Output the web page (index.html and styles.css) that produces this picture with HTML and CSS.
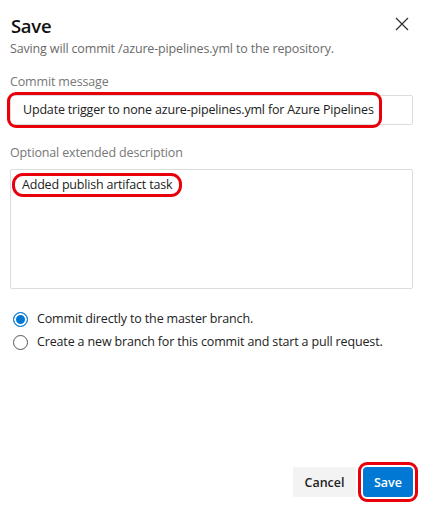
FILE: index.html
```html
<!DOCTYPE html>
<html lang="en">
<head>
<meta charset="utf-8">
<link rel="stylesheet" href="styles.css">
</head>
<body>
<div class="dialog">
  <div class="header">
    <h1 class="title">Save</h1>
    <button class="close" aria-label="Close">
      <svg width="14" height="14" viewBox="0 0 14 14"><path d="M1 1L13 13M13 1L1 13" stroke="#333" stroke-width="1.3" fill="none"/></svg>
    </button>
  </div>
  <p class="subtitle">Saving will commit /azure-pipelines.yml to the repository.</p>

  <label class="label">Commit message</label>
  <div class="field">
    <div class="input">Update trigger to none azure-pipelines.yml for Azure Pipelines</div>
    <div class="mark mark-input"></div>
  </div>

  <label class="label label-desc">Optional extended description</label>
  <div class="textarea"><span class="mark-text">Added publish artifact task</span></div>

  <div class="radios">
    <div class="radio-row"><span class="radio checked"></span><span>Commit directly to the master branch.</span></div>
    <div class="radio-row"><span class="radio"></span><span>Create a new branch for this commit and start a pull request.</span></div>
  </div>

  <div class="footer">
    <button class="btn btn-cancel">Cancel</button>
    <button class="btn btn-save">Save</button>
  </div>
</div>
</body>
</html>
```

FILE: styles.css
```css
* { box-sizing: border-box; }
html, body { margin: 0; padding: 0; background: #fff; }
body {
  font-family: "Open Sans", "Noto Sans", sans-serif;
  color: #222;
  height: 509px;
}
.dialog {
  height: 509px;
  display: flex;
  flex-direction: column;
  padding: 12px 12px 6px 10px;
}
.header {
  display: flex;
  justify-content: space-between;
  align-items: flex-start;
}
.title {
  margin: 0;
  padding-left: 1px;
  font-size: 18.5px;
  font-weight: 600;
  line-height: 28px;
  letter-spacing: -0.3px;
  color: #111;
}
.close {
  border: 0;
  background: transparent;
  padding: 0;
  margin: 5px 4px 0 0;
  width: 14px;
  height: 14px;
  display: flex;
}
.subtitle {
  margin: 0;
  font-size: 12.5px;
  line-height: 18px;
  color: #6b6b6b;
  letter-spacing: -0.15px;
}
.label {
  display: block;
  margin-top: 15px;
  font-size: 12.5px;
  line-height: 18px;
  color: #777;
  letter-spacing: -0.15px;
}
.label-desc { margin-top: 19px; }
.field {
  position: relative;
  margin-top: 4px;
}
.input {
  height: 30px;
  border: 1px solid #dcdcdc;
  border-radius: 2px;
  padding: 0 12px;
  font-size: 12.5px;
  line-height: 28px;
  color: #222;
  white-space: nowrap;
  letter-spacing: -0.18px;
}
.mark {
  position: absolute;
  border: 3px solid #e8000a;
  border-radius: 9px;
}
.mark-input {
  left: -3px;
  top: -3px;
  width: 375px;
  height: 36px;
}
.textarea {
  margin-top: 7px;
  height: 120px;
  border: 1px solid #dcdcdc;
  border-radius: 2px;
  padding: 3px 1px;
  font-size: 12.5px;
  letter-spacing: -0.2px;
}
.mark-text {
  display: inline-block;
  border: 3px solid #e8000a;
  border-radius: 11px;
  padding: 0 7px;
  line-height: 18px;
  color: #222;
}
.radios {
  margin-top: 22px;
  display: flex;
  flex-direction: column;
  gap: 7px;
  padding-left: 3px;
}
.radio-row {
  display: flex;
  align-items: center;
  gap: 9px;
  font-size: 12.5px;
  line-height: 16px;
  color: #222;
  letter-spacing: -0.15px;
}
.radio {
  width: 15px;
  height: 15px;
  border-radius: 50%;
  border: 1px solid #555;
  flex: none;
  background: #fff;
}
.radio.checked {
  border-color: #0078d4;
  background: #0078d4;
  box-shadow: inset 0 0 0 2px #fff;
  border-width: 1.5px;
}
.footer {
  margin-top: auto;
  display: flex;
  justify-content: flex-end;
  gap: 7px;
}
.btn {
  font-family: inherit;
  font-size: 12.5px;
  font-weight: 600;
  height: 30px;
  border: 0;
  border-radius: 2px;
  padding: 0;
}
.btn-cancel {
  width: 63px;
  background: #f3f3f3;
  color: #222;
  margin-bottom: 6px;
}
.btn-save {
  width: 50px;
  background: #0078d4;
  color: #fff;
  outline: 3px solid #e8000a;
  outline-offset: 2px;
  border-radius: 4px;
  margin-bottom: 6px;
}
```
